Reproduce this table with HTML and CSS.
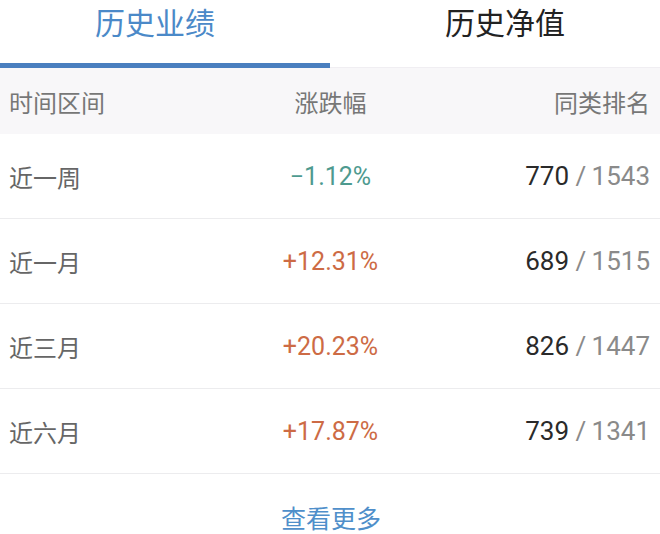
FILE: index.html
```html
<!DOCTYPE html>
<html lang="zh">
<head>
<meta charset="utf-8">
<link rel="stylesheet" href="styles.css">
</head>
<body>
<div class="page">
  <div class="tabs">
    <div class="tab active"><span class="tab-label">历史业绩</span></div>
    <div class="tab second"><span class="tab-label">历史净值</span></div>
  </div>
  <div class="row head">
    <div class="c1">时间区间</div>
    <div class="c2">涨跌幅</div>
    <div class="c3">同类排名</div>
  </div>
  <div class="row">
    <div class="c1">近一周</div>
    <div class="c2 down">−1.12%</div>
    <div class="c3"><span class="rank">770</span><span class="total"> /&#8201;1543</span></div>
  </div>
  <div class="row">
    <div class="c1">近一月</div>
    <div class="c2 up">+12.31%</div>
    <div class="c3"><span class="rank">689</span><span class="total"> /&#8201;1515</span></div>
  </div>
  <div class="row">
    <div class="c1">近三月</div>
    <div class="c2 up">+20.23%</div>
    <div class="c3"><span class="rank">826</span><span class="total"> /&#8201;1447</span></div>
  </div>
  <div class="row">
    <div class="c1">近六月</div>
    <div class="c2 up">+17.87%</div>
    <div class="c3"><span class="rank">739</span><span class="total"> /&#8201;1341</span></div>
  </div>
  <div class="more">查看更多</div>
</div>
</body>
</html>
```
FILE: styles.css
```css
* { box-sizing: border-box; }
html, body { margin: 0; padding: 0; background: #fff; }
body {
  width: 660px;
  height: 534px;
  overflow: hidden;
  font-family: Roboto, "Noto Sans CJK SC", sans-serif;
}
.page { display: flex; flex-direction: column; }
.tabs {
  display: grid;
  grid-template-columns: 330px 330px;
  height: 68px;
}
.tab {
  display: flex;
  justify-content: center;
  align-items: flex-start;
  padding-top: 0;
  padding-right: 20px;
  font-family: "Noto Sans CJK SC", sans-serif;
  font-size: 30px;
  line-height: 42px;
  color: #222;
  border-bottom: 1px solid #f0eef2;
}
.tab.second { padding-right: 0; padding-left: 20px; }
.tab.active {
  color: #4b89c8;
  border-bottom: 5px solid #4a7fbf;
}
.row {
  display: grid;
  grid-template-columns: 1fr 1fr 1fr;
  align-items: center;
  height: 85px;
  padding: 0 10px 0 9px;
  border-bottom: 1px solid #ececee;
}
.row.head {
  height: 66px;
  background: #f8f7f9;
  border-bottom: none;
}
.c1 {
  font-family: "Noto Sans CJK SC", sans-serif;
  color: #666;
  font-size: 24px;
}
.c2 { text-align: center; padding-left: 2px; font-size: 25px; }
.c3 { text-align: right; font-size: 26px; }
.head .c1, .head .c2, .head .c3 {
  font-family: "Noto Sans CJK SC", sans-serif;
  color: #777;
  font-size: 24px;
}
.down { color: #4e9a8f; }
.up { color: #cd6b45; }
.rank { color: #2a2a2a; }
.total { color: #8a8a8a; }
.more {
  height: 85px;
  display: flex;
  justify-content: center;
  align-items: center;
  padding-left: 2px;
  font-family: "Noto Sans CJK SC", sans-serif;
  font-size: 25px;
  color: #4f8fca;
}
```
